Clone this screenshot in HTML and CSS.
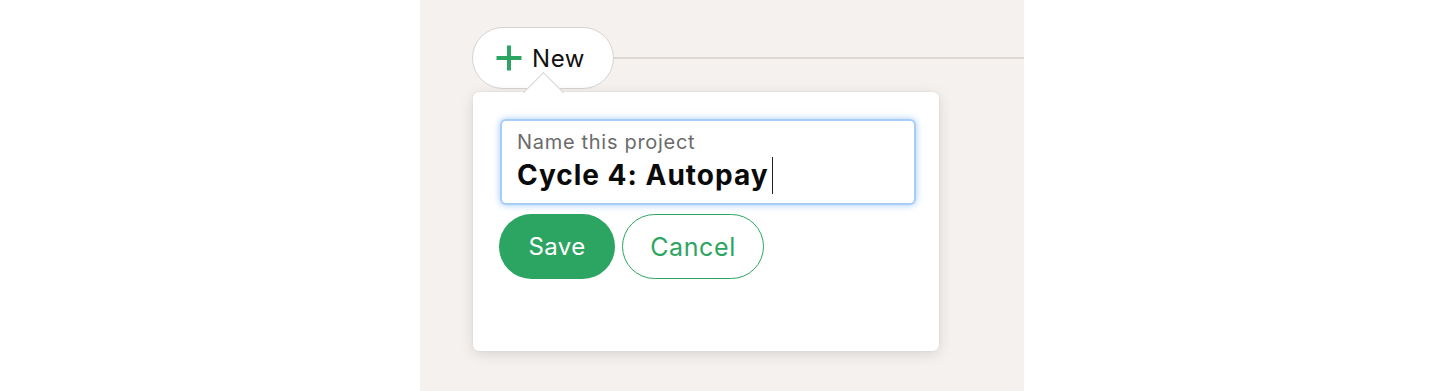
FILE: index.html
```html
<!DOCTYPE html>
<html>
<head>
<meta charset="utf-8">
<link rel="stylesheet" href="styles.css">
</head>
<body>
<div class="stage">
  <div class="toprow">
    <button class="new-btn">
      <svg class="plus" width="28" height="28" viewBox="0 0 28 28"><path d="M14 1.5V26.5M1.5 14H26.5" stroke="#2da562" stroke-width="4" fill="none"/></svg>
      <span>New</span>
    </button>
    <div class="rule"></div>
  </div>
  <div class="popover">
    <div class="caret"></div>
    <div class="field">
      <div class="label">Name this project</div>
      <div class="value">Cycle 4: Autopay<span class="cursor"></span></div>
    </div>
    <div class="actions">
      <button class="btn save">Save</button>
      <button class="btn cancel">Cancel</button>
    </div>
  </div>
</div>
</body>
</html>
```

FILE: styles.css
```css
html, body {
  margin: 0;
  padding: 0;
  background: #ffffff;
  font-family: Inter, "Noto Sans", sans-serif;
}
.stage {
  margin-left: 420px;
  width: 604px;
  height: 391px;
  background: #f4f1ee;
  padding: 27px 0 0 52px;
  box-sizing: border-box;
  overflow: hidden;
}
.toprow {
  display: flex;
  align-items: center;
}
.new-btn {
  display: flex;
  align-items: center;
  gap: 9px;
  height: 62px;
  width: 142px;
  box-sizing: border-box;
  padding: 0 0 0 22px;
  border: 1.5px solid #d6d4d2;
  border-radius: 31px;
  background: #ffffff;
  font-family: inherit;
  font-size: 24px;
  letter-spacing: 0.6px;
  color: #111111;
  flex-shrink: 0;
}
.plus { display: block; }
.rule {
  flex: 1;
  height: 2px;
  background: #ddd8d4;
}
.popover {
  position: relative;
  margin-top: 3px;
  margin-left: 1px;
  width: 466px;
  height: 259px;
  box-sizing: border-box;
  padding: 27px 0 0 27px;
  background: #ffffff;
  border-radius: 6px;
  box-shadow: 0 3px 14px rgba(0, 0, 0, 0.12), 0 0 2px rgba(0, 0, 0, 0.08);
}
.caret {
  position: absolute;
  left: 56px;
  top: -14px;
  width: 28px;
  height: 28px;
  background: #ffffff;
  border-top: 1.5px solid #d6d4d2;
  border-left: 1.5px solid #d6d4d2;
  transform: rotate(45deg);
}
.field {
  position: relative;
  width: 416px;
  height: 86px;
  box-sizing: border-box;
  border: 2px solid #a6cdf8;
  border-radius: 6px;
  box-shadow: 0 0 7px rgba(100, 165, 245, 0.6);
  padding: 8px 0 0 15px;
  background: #ffffff;
}
.label {
  font-size: 20px;
  letter-spacing: 0.7px;
  line-height: 26px;
  color: #6b6b6b;
}
.value {
  font-size: 28px;
  font-weight: 700;
  letter-spacing: 1px;
  line-height: 40px;
  color: #0a0a0a;
  display: flex;
  align-items: center;
}
.cursor {
  display: inline-block;
  width: 1.5px;
  height: 37px;
  background: #222;
  margin-left: 3px;
}
.actions {
  display: flex;
  gap: 7px;
  margin-top: 9px;
  margin-left: -1px;
}
.btn {
  height: 65px;
  border-radius: 33px;
  font-family: inherit;
  font-size: 24px;
  letter-spacing: 0.4px;
  box-sizing: border-box;
  padding: 0;
}
.save {
  width: 116px;
  background: #2da562;
  color: #ffffff;
  border: none;
}
.cancel {
  width: 142px;
  background: #ffffff;
  color: #2da562;
  border: 1.5px solid #2da562;
  font-size: 25px;
  letter-spacing: 0.6px;
}
```
